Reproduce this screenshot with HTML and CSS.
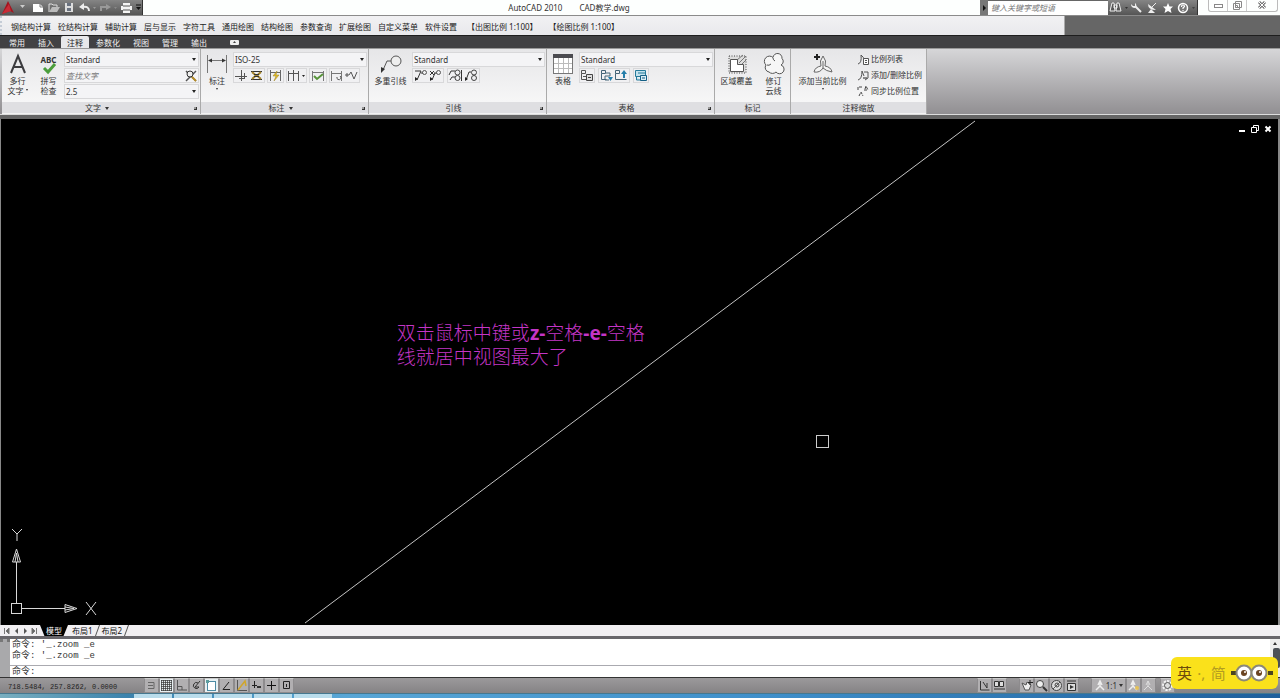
FILE: index.html
```html
<!DOCTYPE html>
<html lang="zh-CN">
<head>
<meta charset="UTF-8">
<meta name="viewport" content="width=device-width, initial-scale=1.0">
<title>AutoCAD 2010 CAD教学.dwg</title>
<link rel="stylesheet" href="styles.css">
</head>
<body>

<header class="titlebar">
    <div class="quick-access">
        <button class="app-button" aria-label="菜单"><svg width="30" height="15" viewBox="0 0 30 15"><path d="M2 14 8 1l6 12-4-2z" fill="#a3151f"/><path d="M2 14 9 4l2 7z" fill="#c92c37"/><path d="M20 5h5l-2.500 3z" fill="#ccc"/></svg></button>
        <button aria-label="新建"><svg width="17" height="15" viewBox="0 0 17 15"><path d="M3 4h7l3 3v5H3z" fill="#fff"/><path d="M10 4v3h3" fill="none" stroke="#777"/></svg></button>
        <button aria-label="打开"><svg width="14" height="15" viewBox="0 0 14 15"><path d="M2 12V4h3l1 1h4v2" fill="none" stroke="#ddd"/><path d="M2 12 5 7h8l-3 5z" fill="#bbb"/></svg></button>
        <button aria-label="保存"><svg width="15" height="15" viewBox="0 0 15 15"><path d="M4 3h8v9H4z" fill="#ddd"/><path d="M6 3h4v3H6zM6 8h4v3H6z" fill="#6a7280"/></svg></button>
        <button aria-label="放弃"><svg width="21" height="15" viewBox="0 0 21 15"><path d="M8 3v7L3 7z" fill="#eee"/><path d="M7 7q6-1 6 4" fill="none" stroke="#eee" stroke-width="2"/><path d="M17 7h3l-1.500 2z" fill="#999"/></svg></button>
        <button aria-label="重做"><svg width="22" height="15" viewBox="0 0 22 15"><path d="M9 4v6l5-3z" fill="#999"/><path d="M9 7H4v4" fill="none" stroke="#999" stroke-width="2"/><path d="M17 7h3l-1.500 2z" fill="#888"/></svg></button>
        <button aria-label="打印"><svg width="23" height="15" viewBox="0 0 23 15"><path d="M4 3h7v3H4zM2 6h11v4H2zM4 9h7v4H4z" fill="#f4f4f4"/><path d="M4 6h7M4 10h7" stroke="#555"/><path d="M17 5h5" stroke="#111"/><path d="M17 7h5l-2.500 3z" fill="#111"/></svg></button>
    </div>
    <h1 class="caption"><span>AutoCAD 2010</span><span>CAD教学.dwg</span></h1>
    <div class="infocenter">
        <button class="expand" aria-label="展开"><svg width="8" height="15" viewBox="0 0 8 15"><path d="M3 5v6l3-3z" fill="#111"/></svg></button>
        <input type="text" placeholder="键入关键字或短语" aria-label="搜索">
        <button aria-label="查找"><svg width="21" height="15" viewBox="0 0 21 15"><path d="M4 3h2l1 8H2zM9 3h2l2 8H8zM6 5h3v3H6z" fill="#555" stroke="#eee"/><path d="M17 7h3l-1.500 2z" fill="#333"/></svg></button>
        <button aria-label="速博应用中心"><svg width="15" height="15" viewBox="0 0 15 15"><path d="m6 6 6 6" stroke="#eee" stroke-width="2"/><path d="M2 4q0 4 4 4 2-1 1-4L6 3v3H4z" fill="#eee"/></svg></button>
        <button aria-label="通讯中心"><svg width="16" height="15" viewBox="0 0 16 15"><path d="M4 4q0 6 8 6zM7 9l-3 4h7z" fill="#eee"/><path d="m8 7 4-4" stroke="#eee"/></svg></button>
        <button aria-label="收藏夹"><svg width="15" height="15" viewBox="0 0 15 15"><path d="m8 3 1.500 3.500H13L10.500 9l1 4L8 11l-3.500 2 1-4L3 6.500h3.500z" fill="#fff"/></svg></button>
        <button aria-label="帮助"><svg width="22" height="15" viewBox="0 0 22 15"><circle cx="8" cy="8" r="4.500" fill="#777" stroke="#fff" stroke-width="1.500"/><path d="M6.500 7q0-2 1.500-2t1.500 1.500L8 8v1M8 10v1" fill="none" stroke="#fff" stroke-width="1.200"/><path d="M17 7h3l-1.500 2z" fill="#444"/></svg></button>
    </div>
    <div class="window-buttons">
        <button aria-label="最小化"><svg width="18" height="11" viewBox="0 0 18 11"><rect x="5.500" y="4.500" width="8" height="3" fill="#fff" stroke="#888"/></svg></button>
        <button aria-label="还原"><svg width="18" height="11" viewBox="0 0 18 11"><path d="M7.500 1.500h6v6h-6zM5.500 3.500h6v6h-6zM7.500 5.500h2v2h-2z" fill="#fff" stroke="#888"/></svg></button>
        <button class="close" aria-label="关闭"><svg width="30" height="11" viewBox="0 0 30 11"><path d="m12 2 6 6m0-6-6 6" stroke="#777" stroke-width="3"/><path d="m12 2 6 6m0-6-6 6" stroke="#fff"/></svg></button>
    </div>
</header>

<div class="menu-row">
    <nav class="menubar">
        <a href="#">钢结构计算</a>
        <a href="#">砼结构计算</a>
        <a href="#">辅助计算</a>
        <a href="#">层与显示</a>
        <a href="#">字符工具</a>
        <a href="#">通用绘图</a>
        <a href="#">结构绘图</a>
        <a href="#">参数查询</a>
        <a href="#">扩展绘图</a>
        <a href="#">自定义菜单</a>
        <a href="#">软件设置</a>
        <a href="#" class="scale">【出图比例 1:100】</a>
        <a href="#" class="scale">【绘图比例 1:100】</a>
    </nav>
</div>

<nav class="ribbon-tabs">
    <button>常用</button>
    <button>插入</button>
    <button class="active">注释</button>
    <button>参数化</button>
    <button>视图</button>
    <button>管理</button>
    <button>输出</button>
    <button class="minimize" aria-label="最小化功能区"><svg width="9" height="6" viewBox="0 0 9 6"><rect width="9" height="5" y="1" rx="1" fill="#eee"/><path d="M3 4h3L4.500 2z" fill="#444"/></svg></button>
</nav>

<main class="ribbon">
    <section class="panel panel-text">
        <div class="panel-body">
            <button class="big narrow">
                <svg width="24" height="24" viewBox="0 0 24 24"><path d="m5 21 7-17 7 17M8 15h9" fill="none" stroke="#3d3d40" stroke-width="2"/></svg>
                <span>多行<br>文字<i class="caret"></i></span>
            </button>
            <button class="big narrow">
                <span class="abc">ABC</span>
                <svg width="24" height="14" viewBox="0 0 24 14"><path d="m7 6 4 4 7-8" fill="none" stroke="#4b9e3c" stroke-width="3"/></svg>
                <span>拼写<br>检查</span>
            </button>
            <div class="stack">
                <div class="combo"><select aria-label="文字样式"><option>Standard</option></select></div>
                <div class="find"><input type="text" placeholder="查找文字" aria-label="查找文字"><button aria-label="查找"><svg width="14" height="14" viewBox="0 0 14 14"><path d="m2 2 10 10M12 2 2 12" stroke="#555" stroke-width="1.500"/><circle cx="6" cy="5" r="3" fill="#eee" stroke="#333"/><path d="m8 8 4 4" stroke="#b58b26" stroke-width="2"/></svg></button></div>
                <div class="combo"><select aria-label="文字高度"><option>2.5</option></select></div>
            </div>
        </div>
        <h2>文字<i class="caret"></i><i class="launcher"></i></h2>
    </section>

    <section class="panel panel-dim">
        <div class="panel-body">
            <button class="big">
                <svg width="24" height="24" viewBox="0 0 24 24"><path d="M2.500 3v18M21.500 3v18M4 8.500h16" stroke="#777"/><path d="m3 8.500 4-2v4zM21 8.500l-4-2v4z" fill="#333"/></svg>
                <span>标注<i class="caret below"></i></span>
            </button>
            <div class="stack">
                <div class="combo"><select aria-label="标注样式"><option>ISO-25</option></select></div>
                <div class="tools">
                    <div class="group">
                        <button aria-label="打断"><svg width="15" height="13" viewBox="0 0 15 13"><path d="M1 7.500h12M7.500 1v11M5 9.500h5M10.500 4v6" stroke="#555"/></svg></button>
                        <button aria-label="调整间距"><svg width="15" height="13" viewBox="0 0 15 13"><path d="M2 2.500h11M2 10.500h11" stroke="#333"/><path d="m3 3 4 3.500L3 10M12 3 8 6.500l4 3.500" fill="none" stroke="#a3832b" stroke-width="2"/><path d="M5 5.500h5M5 7.500h5" stroke="#333"/></svg></button>
                    </div>
                    <div class="group">
                        <button aria-label="快速标注"><svg width="15" height="13" viewBox="0 0 15 13"><path d="M2.500 1v11M12.500 1v11M3 3.500h9" stroke="#666"/><path d="M9 2 5 7h3l-2 5 5-6H8z" fill="#e3bd28" stroke="#9b8123" stroke-width=".5"/></svg></button>
                    </div>
                    <div class="group">
                        <button aria-label="连续"><svg width="19" height="13" viewBox="0 0 19 13"><path d="M1.500 2v10M6.500 1v11M11.500 2v10M2 4.500h10" stroke="#555"/><path d="M15 6h3l-1.500 2z" fill="#222"/></svg></button>
                    </div>
                    <div class="group">
                        <button aria-label="检验"><svg width="16" height="13" viewBox="0 0 16 13"><path d="M2.500 2v10M13.500 2v10M3 3.500h10" stroke="#777"/><path d="m4 7 3 3 6-5" fill="none" stroke="#58943b" stroke-width="2"/></svg></button>
                    </div>
                    <div class="group">
                        <button aria-label="更新"><svg width="14" height="13" viewBox="0 0 14 13"><path d="M1.500 2v10M11.500 2v10M2 4.500h9" stroke="#777"/><path d="M10 7a2 2 0 1 1-3 1" fill="none" stroke="#555"/></svg></button>
                        <button aria-label="折弯标注"><svg width="15" height="13" viewBox="0 0 15 13"><path d="M1 6h4l2-3 3 7 3-7M3 4v4" fill="none" stroke="#555"/></svg></button>
                    </div>
                </div>
            </div>
        </div>
        <h2>标注<i class="caret"></i><i class="launcher"></i></h2>
    </section>

    <section class="panel panel-leader">
        <div class="panel-body">
            <button class="big wide">
                <svg width="24" height="24" viewBox="0 0 24 24"><circle cx="17" cy="9" r="5" fill="#eee" stroke="#555"/><path d="M12 9H8L4 18" fill="none" stroke="#555"/><path d="m2 21 0-6 4 2z" fill="#333"/></svg>
                <span>多重引线</span>
            </button>
            <div class="stack">
                <div class="combo"><select aria-label="引线样式"><option>Standard</option></select></div>
                <div class="tools">
                    <div class="group">
                        <button aria-label="添加引线"><svg width="15" height="13" viewBox="0 0 15 13"><path d="M2 2h6L4 11M8 4h2" fill="none" stroke="#333"/><path d="m2 8 0 4 3-2z" fill="#222"/><circle cx="11.500" cy="3.500" r="2" fill="none" stroke="#555"/></svg></button>
                        <button aria-label="删除引线"><svg width="15" height="13" viewBox="0 0 15 13"><path d="m2 2 4 4m0-4L2 6M6 4h3M7 4l-3 7" fill="none" stroke="#333"/><path d="m2 8 0 4 3-2z" fill="#222"/><circle cx="10.500" cy="3.500" r="2" fill="none" stroke="#555"/></svg></button>
                    </div>
                    <div class="group">
                        <button aria-label="对齐"><svg width="16" height="13" viewBox="0 0 16 13"><path d="M7 2H3L1 6M7 8H4l-2 3M13.500 1v11" fill="none" stroke="#333"/><circle cx="9.500" cy="3.500" r="2.500" fill="none" stroke="#444"/><circle cx="9.500" cy="9" r="2.500" fill="none" stroke="#444"/></svg></button>
                        <button aria-label="合并"><svg width="15" height="13" viewBox="0 0 15 13"><path d="M7 3H5l-3 8" fill="none" stroke="#333"/><path d="m1 8 0 4 3-2z" fill="#222"/><circle cx="10" cy="3.500" r="2.500" fill="none" stroke="#444"/><circle cx="10" cy="9" r="2.500" fill="none" stroke="#444"/></svg></button>
                    </div>
                </div>
            </div>
        </div>
        <h2>引线<i class="launcher"></i></h2>
    </section>

    <section class="panel panel-table">
        <div class="panel-body">
            <button class="big">
                <svg width="24" height="24" viewBox="0 0 24 24"><rect x="2.500" y="2.500" width="19" height="19" fill="#fff" stroke="#777"/><path d="M2 2h20v4H2z" fill="#4b4b50"/><path d="M7.500 6v15M12.500 6v15M17.500 6v15M3 11.500h18M3 16.500h18" stroke="#bbb"/></svg>
                <span>表格</span>
            </button>
            <div class="stack">
                <div class="combo"><select aria-label="表格样式"><option>Standard</option></select></div>
                <div class="tools">
                    <div class="group">
                        <button aria-label="提取数据"><svg width="14" height="13" viewBox="0 0 14 13"><path d="M1.500 1.500h4v3h-4zM1.500 4.500v6h5M3 7.500h3" fill="none" stroke="#555"/><path d="M6.500 5.500h6v6h-6zM8 8.500h3" fill="#ddd" stroke="#444"/></svg></button>
                    </div>
                    <div class="group">
                        <button aria-label="从源下载"><svg width="15" height="13" viewBox="0 0 15 13"><path d="M2.500 1.500h4v3h-4zM2.500 4.500v6h5M7 4h4v3H6v4h4" fill="none" stroke="#456477"/><path d="M9 8h5l-2.500 4z" fill="#257eaa"/></svg></button>
                        <button aria-label="上载到源"><svg width="15" height="13" viewBox="0 0 15 13"><path d="M1.500 1.500h4v3h-4zM1.500 4.500v6h11" fill="none" stroke="#456477"/><path d="M7 5h6l-3-4zM9 5h2v4H9z" fill="#257eaa"/></svg></button>
                    </div>
                    <div class="group">
                        <button aria-label="数据链接"><svg width="14" height="13" viewBox="0 0 14 13"><path d="M1.500 1.500h10v6h-10zM4 4h7M2.500 8v3h5" fill="#c4e2ed" stroke="#257b9a"/><path d="M6.500 6.500h6v5h-6zM8 9h3" fill="#d9edf4" stroke="#145f85"/></svg></button>
                    </div>
                </div>
            </div>
        </div>
        <h2>表格<i class="launcher"></i></h2>
    </section>

    <section class="panel panel-markup">
        <div class="panel-body">
            <button class="big wide">
                <svg width="24" height="24" viewBox="0 0 24 24"><path d="M4 4h17v17H4z" fill="#ddd" stroke="#444" stroke-dasharray="1 1.500"/><path d="m12 8 6-5m-4 8 7-7m-5 9 5-5" stroke="#777"/><path d="M5.500 7.500h7v5h6v7h-13z" fill="#fff" stroke="#555"/></svg>
                <span>区域覆盖</span>
            </button>
            <button class="big narrow">
                <svg width="24" height="24" viewBox="0 0 24 24"><path d="M11 5.500a4.500 4.500 0 0 1 9 1 4 4 0 0 1-1 6.500 4.500 4.500 0 1 1-5 7 5 5 0 0 1-7 0 4.500 4.500 0 0 1-3-7 4.500 4.500 0 1 1 7-7.500zM5 13q2 1 4-1M11 6q0 2 2 3" fill="#f6f6f6" stroke="#555"/></svg>
                <span>修订<br>云线</span>
            </button>
        </div>
        <h2>标记</h2>
    </section>

    <section class="panel panel-scale">
        <div class="panel-body">
            <button class="big xwide">
                <svg width="24" height="24" viewBox="0 0 24 24"><path d="M12 4q4 5 2 10 6 1 7 6-6-1-9-4-3 5-9 4 1-5 7-6-2-5 2-10zM12 16V9" fill="#f4f4f4" stroke="#666"/><path d="M6 2v6M3 5h6" stroke="#222" stroke-width="2"/></svg>
                <span>添加当前比例<i class="caret below"></i></span>
            </button>
            <div class="list">
                <button><svg width="12" height="12" viewBox="0 0 12 12"><path d="M1 11q4-1 3-9 3 2 3 5" fill="none" stroke="#555"/><path d="M6.500 5.500h5v6h-5zM8 7.500h2M8 9.500h2" fill="#fff" stroke="#555"/></svg>比例列表</button>
                <button><svg width="12" height="12" viewBox="0 0 12 12"><path d="M1 11q4-1 4-9l2 5M7 3h4v6l-3 2" fill="none" stroke="#555"/><path d="M6 9h4" stroke="#222"/></svg>添加/删除比例</button>
                <button><svg width="12" height="12" viewBox="0 0 12 12"><path d="M1 5V2h4M2 11l2-4 2 4M8 4l1-3 2 4M7 5h4" fill="none" stroke="#444" stroke-dasharray="3 1"/></svg>同步比例位置</button>
            </div>
        </div>
        <h2>注释缩放</h2>
    </section>
</main>

<section class="drawing">
    <svg class="model" viewBox="0 0 1277 506" preserveAspectRatio="none">
        <path d="M974 2 304 504" stroke="#c4c4c4" fill="none"/>
        <rect x="815.500" y="316.500" width="12" height="12" fill="none" stroke="#ccc"/>
    </svg>
    <p class="note">双击鼠标中键或<b>z-</b>空格<b>-e-</b>空格<br>线就居中视图最大了</p>
    <svg class="ucs" width="90" height="90" viewBox="0 0 90 90" fill="none" stroke="#d8d8d8">
        <path d="m5 0 5 5 5-5M10 5v7M9.500 74V33M5.500 33l4-13 4 13zM8 33l1.500-9 1.500 9M15 79.500h43M58 75.500l12 4-12 4zM58 78l9 1.500-9 1.500M79 73l10 13M89 73 79 86"/>
        <rect x="4.500" y="74.500" width="10" height="10"/>
    </svg>
    <div class="doc-buttons">
        <button aria-label="最小化"><svg width="8" height="8" viewBox="0 0 8 8"><path d="M1 6h6" stroke="#fff" stroke-width="2"/></svg></button>
        <button aria-label="还原"><svg width="8" height="8" viewBox="0 0 8 8"><path d="M2.500 2V.5h5v5H6M.5 2.500h5v5h-5z" fill="none" stroke="#fff"/></svg></button>
        <button aria-label="关闭"><svg width="8" height="8" viewBox="0 0 8 8"><path d="m1.500 1.500 5 5m0-5-5 5" stroke="#fff" stroke-width="2"/></svg></button>
    </div>
</section>

<nav class="layout-tabs">
    <button aria-label="第一个"><svg width="10" height="10" viewBox="0 0 10 10"><path d="M2.500 2v6M7 2 4 5l3 3z" fill="#666" stroke="#777"/></svg></button>
    <button aria-label="上一个"><svg width="9" height="10" viewBox="0 0 9 10"><path d="M6 2v6L3 5z" fill="#555"/></svg></button>
    <button aria-label="下一个"><svg width="9" height="10" viewBox="0 0 9 10"><path d="M3 2v6l3-3z" fill="#555"/></svg></button>
    <button aria-label="最后一个"><svg width="10" height="10" viewBox="0 0 10 10"><path d="M6.500 2v6M2 2l3 3-3 3z" fill="#666" stroke="#777"/></svg></button>
    <button class="sheet active">模型</button>
    <button class="sheet">布局1</button><span class="slash"></span>
    <button class="sheet">布局2</button><span class="slash"></span>
</nav>

<section class="command">
    <div class="grip"></div>
    <div class="console">
        <div class="history">命令: '_.zoom _e<br>命令: '_.zoom _e</div>
        <label class="prompt">命令: <input type="text"></label>
    </div>
    <div class="scrollbar"><svg width="9" height="9" viewBox="0 0 9 9"><path d="M3 6h4L5 3z" fill="#333"/></svg><div class="thumb"></div></div>
</section>

<footer class="statusbar">
    <span class="coords">718.5484, 257.8262, 0.0000</span>
    <div class="toggles">
        <button aria-label="捕捉"><svg width="13" height="13" viewBox="0 0 13 13"><path d="M3 3.500h6v6H3M3 6.500h5" fill="none" stroke="#666"/></svg></button>
        <button class="on" aria-label="栅格"><svg width="13" height="13" viewBox="0 0 13 13"><path d="M1 1.500h11M1 3.500h11M1 5.500h11M1 7.500h11M1 9.500h11M1 11.500h11M1.500 1v11M3.500 1v11M5.500 1v11M7.500 1v11M9.500 1v11M11.500 1v11" stroke="#333" stroke-width=".700"/></svg></button>
        <button aria-label="正交"><svg width="13" height="13" viewBox="0 0 13 13"><path d="M2.500 1v10H12M3 7.500h4V11" fill="none" stroke="#555"/></svg></button>
        <button aria-label="极轴"><svg width="13" height="13" viewBox="0 0 13 13"><path d="M8 4a3 3 0 1 0 1 4H5l5-6" fill="none" stroke="#333"/></svg></button>
        <button class="on" aria-label="对象捕捉"><svg width="13" height="13" viewBox="0 0 13 13"><rect x="2.500" y="2.500" width="8" height="9" fill="#fff" stroke="#4d8ba4"/><path d="M1 1h3v3H1z" fill="#5d9d9d"/></svg></button>
        <button aria-label="对象追踪"><svg width="13" height="13" viewBox="0 0 13 13"><path d="M9 3 3 10.500h7" fill="none" stroke="#222"/></svg></button>
        <button aria-label="动态UCS"><svg width="13" height="13" viewBox="0 0 13 13"><path d="M2.500 1v10.500H12" fill="none" stroke="#555"/><path d="m3 11 7-9 1 5" fill="none" stroke="#d0a62b" stroke-width="1.500"/></svg></button>
        <button aria-label="动态输入"><svg width="13" height="13" viewBox="0 0 13 13"><path d="M4.500 2v7M2 6.500h5" stroke="#222"/><path d="M7 7h4v2H7z" fill="#333"/></svg></button>
        <button aria-label="线宽"><svg width="13" height="13" viewBox="0 0 13 13"><path d="M6.500 2v9M2 6.500h9" stroke="#111"/></svg></button>
        <button aria-label="快捷特性"><svg width="13" height="13" viewBox="0 0 13 13"><path d="M3.500 2.500h6v7h-6zM6.500 5v3" fill="none" stroke="#222"/></svg></button>
    </div>
    <div class="view-tools">
        <div class="toggles">
            <button aria-label="快速查看布局"><svg width="13" height="13" viewBox="0 0 13 13"><path d="M2.500 2v9h9M5 3l4 6V4" fill="none" stroke="#333"/></svg></button>
            <button aria-label="快速查看图形"><svg width="13" height="13" viewBox="0 0 13 13"><path d="M1.500 2.500h4v5h-4zM6.500 2.500h4v5h-4zM1 10h11" fill="#ddd" stroke="#333"/></svg></button>
        </div>
        <div class="toggles">
            <button aria-label="平移"><svg width="13" height="13" viewBox="0 0 13 13"><path d="M2 4 5 11h4l2-5-4-3-1 3z" fill="#eee" stroke="#555"/><path d="M10 1v5M8 3.500h5" stroke="#222"/></svg></button>
            <button aria-label="缩放"><svg width="13" height="13" viewBox="0 0 13 13"><circle cx="5" cy="5" r="3.500" fill="#eee" stroke="#444"/><path d="m8 8 4 4" stroke="#333" stroke-width="2"/></svg></button>
            <button aria-label="控制盘"><svg width="13" height="13" viewBox="0 0 13 13"><circle cx="6.500" cy="6.500" r="5" fill="#ddd" stroke="#444"/><circle cx="7" cy="6" r="2" fill="none" stroke="#444"/><path d="m3 10 7-7" stroke="#555"/></svg></button>
            <button aria-label="ShowMotion"><svg width="13" height="13" viewBox="0 0 13 13"><path d="M2.500 4.500h8v7h-8zM2 2h9" fill="#ddd" stroke="#333"/><path d="m5 6 4 2-4 2z" fill="#333"/></svg></button>
        </div>
        <div class="toggles">
            <button class="anno"><svg width="12" height="13" viewBox="0 0 12 13"><path d="M6 2v5l-4 4M6 7l4 4M4 6l2-4 2 4" fill="none" stroke="#eee" stroke-width="1.500"/></svg>1:1<i class="caret"></i></button>
            <button aria-label="注释可见性"><svg width="13" height="13" viewBox="0 0 13 13"><path d="M6 2v5l-4 4M6 7l4 4M4 6l2-4 2 4" fill="none" stroke="#eee" stroke-width="1.500"/><circle cx="10" cy="9" r="2" fill="#e5c257"/></svg></button>
            <button aria-label="自动缩放"><svg width="13" height="13" viewBox="0 0 13 13"><path d="M6 2v5l-4 4M6 7l4 4M4 6l2-4 2 4" fill="none" stroke="#ddd"/></svg></button>
        </div>
        <div class="toggles workspace">
            <button aria-label="工作空间"><svg width="13" height="13" viewBox="0 0 13 13"><circle cx="6.500" cy="6.500" r="4" fill="none" stroke="#f4f4f4" stroke-width="3" stroke-dasharray="2 1"/><circle cx="6.500" cy="6.500" r="3" fill="#ddd" stroke="#555"/></svg></button>
        </div>
    </div>
</footer>

<div class="taskbar"><span></span><span></span><span></span><span></span><span></span></div>

<aside class="ime">
    <span>英</span>
    <span class="dim">·,</span>
    <span class="dim">简</span>
    <svg width="42" height="20" viewBox="0 0 42 20"><path d="M0 8h5v4H0zM37 8h5v4h-5z" fill="#4c4420"/><circle cx="13" cy="10" r="7.500" fill="#fff" stroke="#8b8878" stroke-width="2"/><circle cx="28" cy="10" r="7.500" fill="#fff" stroke="#8b8878" stroke-width="2"/><circle cx="13" cy="10" r="3" fill="#6b4422"/><circle cx="28" cy="10" r="3" fill="#6b4422"/><circle cx="14" cy="9" r="1" fill="#fff"/><circle cx="29" cy="9" r="1" fill="#fff"/></svg>
</aside>

</body>
</html>
```
FILE: styles.css
```css
* {
    box-sizing: border-box;
}
body {
    margin: 0;
    height: 100vh;
    display: flex;
    flex-direction: column;
    overflow: hidden;
    background: #666;
    color: #333;
    font: 8px/12px "Noto Sans", "Noto Sans CJK SC", sans-serif;
}
button, input, select {
    font: inherit;
    color: inherit;
    margin: 0;
    padding: 0;
    border: 0;
    border-radius: 0;
    background: none;
}
button {
    white-space: nowrap;
}
svg {
    display: block;
    flex: none;
}
h1, h2, p {
    margin: 0;
    font-size: 8px;
    font-weight: normal;
}
a {
    color: inherit;
    text-decoration: none;
}

/* title bar */
.titlebar {
    display: flex;
    flex: none;
    height: 16px;
    background: #fdfffe;
    border-bottom: 1px solid #8b8b8b;
}
.quick-access, .infocenter {
    display: flex;
    background: linear-gradient(#858585, #555);
    border-right: 1px solid #333;
}
.caption {
    flex: 1;
    display: flex;
    justify-content: center;
    gap: 17px;
    padding-left: 15px;
    line-height: 15px;
}
.infocenter {
    width: 218px;
    margin-right: 10px;
}
.infocenter input {
    flex: 1;
    min-width: 0;
    padding-left: 3px;
    background: #fff;
    border-top: 1px solid #666;
    font-style: italic;
}
.expand {
    background: #777;
}
input::placeholder {
    color: #777;
    opacity: 1;
}
.window-buttons {
    display: flex;
    height: 12px;
    margin-right: 2px;
    border: 1px solid #bbb;
    border-top: 0;
    border-radius: 0 0 3px 3px;
}
.window-buttons button + button {
    border-left: 1px solid #ccc;
}

/* menu */
.menu-row {
    flex: none;
    height: 20px;
    background: #666;
    border-bottom: 1px solid #1e1e1e;
}
.menubar {
    display: flex;
    gap: 7px;
    width: 83.2%;
    height: 19px;
    padding-left: 9px;
    background: linear-gradient(#f1f1f3, #e9e9ec);
    border-left: 2px dotted #c5ccd6;
    border-right: 1px solid #aaa;
    line-height: 21px;
    white-space: nowrap;
    color: #222;
}
.menubar .scale {
    margin-left: 3px;
}
.menubar .scale + .scale {
    margin-left: 4px;
}

/* ribbon */
.ribbon-tabs {
    display: flex;
    flex: none;
    gap: 1px;
    height: 12px;
    padding-left: 3px;
    background: #414143;
    color: #f2f2f2;
}
.ribbon-tabs button {
    padding: 0 6px;
    line-height: 13px;
}
.ribbon-tabs .active {
    background: #e8e8ea;
    color: #222;
    border-radius: 2px 2px 0 0;
}
.ribbon-tabs .minimize {
    margin-left: 10px;
}
.ribbon {
    display: flex;
    flex: none;
    height: 67px;
    padding-left: 2px;
    background: linear-gradient(#d6d6d8, #918f92);
    border-top: 1px solid #999;
    border-bottom: 1px solid #ddd;
}
.panel {
    display: flex;
    flex-direction: column;
    border-right: 1px solid #aaa;
    background: linear-gradient(#e6e6e8, #fafafa);
}
.panel-text {
    width: 199px;
}
.panel-dim, .panel-table {
    width: 168px;
}
.panel-leader {
    width: 178px;
}
.panel-markup {
    width: 76px;
}
.panel-scale {
    width: 136px;
}
.panel-body {
    display: flex;
    flex: 1;
    padding-top: 3px;
}
.panel h2 {
    position: relative;
    height: 12px;
    padding-right: 8px;
    background: #dfdfe2;
    border-bottom: 1px solid #f3f3f3;
    text-align: center;
    line-height: 11px;
}
.panel-markup h2, .panel-scale h2 {
    padding-right: 0;
}
.big {
    display: flex;
    flex-direction: column;
    align-items: center;
    width: 32px;
    line-height: 10px;
}
.big.narrow {
    width: 31px;
}
.big.wide {
    width: 43px;
}
.big.xwide {
    width: 63px;
}
.abc {
    height: 10px;
    font-weight: bold;
    line-height: 15px;
}
.caret {
    display: inline-block;
    margin-left: 4px;
    border: 2px solid transparent;
    border-top: 3px solid #333;
    border-bottom: 0;
    vertical-align: 1px;
}
.big .caret {
    margin-left: 2px;
    border-width: 2px 1px 0;
    vertical-align: 3px;
}
.caret.below, .big .caret.below {
    display: block;
    width: 2px;
    margin: 2px auto 0;
}
.launcher {
    position: absolute;
    right: 3px;
    bottom: 3px;
    width: 3px;
    height: 3px;
    border-right: 1px solid #333;
    border-bottom: 1px solid #333;
    background: #999;
}
.stack {
    display: flex;
    flex: 1;
    flex-direction: column;
    gap: 1px;
}
.combo, .find {
    position: relative;
    display: flex;
    height: 15px;
    margin-right: 1px;
    background: #f4f4f6;
    border: 1px solid #d8d8da;
}
.combo select {
    width: 100%;
    padding-left: 1px;
    appearance: none;
}
.combo::after {
    content: "";
    position: absolute;
    right: 2px;
    top: 5px;
    border: 2px solid transparent;
    border-top: 3px solid #222;
    border-bottom: 0;
    pointer-events: none;
}
.find input {
    flex: 1;
    min-width: 0;
    padding-left: 1px;
    font-style: italic;
}
.tools {
    display: flex;
    gap: 2px;
}
.panel-leader .tools, .panel-table .tools {
    gap: 3px;
}
.group {
    display: flex;
    background: #f0f0f2;
    border: 1px solid #d8d8da;
}
.panel-scale .list {
    display: flex;
    flex-direction: column;
    gap: 4px;
    padding-left: 3px;
    padding-top: 1px;
}
.list button {
    display: flex;
    gap: 2px;
    line-height: 12px;
}

/* drawing area */
.drawing {
    position: relative;
    flex: 1;
    min-height: 0;
    margin-top: 4px;
    background: #000;
    border-left: 1px solid #888;
    border-right: 2px solid #888;
}
.model {
    width: 100%;
    height: 100%;
}
.note {
    position: absolute;
    left: 31%;
    top: 40%;
    color: #c435c6;
    font-size: 19px;
    font-weight: 300;
    line-height: 24px;
    white-space: nowrap;
}
.note b {
    font-weight: 700;
}
.ucs {
    position: absolute;
    left: 6px;
    bottom: 6px;
    overflow: visible;
}
.doc-buttons {
    position: absolute;
    top: 6px;
    right: 6px;
    display: flex;
    gap: 5px;
}

/* layout tabs */
.layout-tabs {
    display: flex;
    flex: none;
    height: 11px;
    padding-left: 2px;
    background: #f1eff2;
    line-height: 11px;
    color: #111;
}
.sheet {
    padding: 0 4px;
}
.sheet.active {
    padding: 0 6px;
    background: #000;
    color: #fff;
    clip-path: polygon(0 0, 100% 0, 84% 100%, 16% 100%);
}
.slash {
    width: 1px;
    height: 11px;
    background: #555;
    transform: skewX(-20deg);
}

/* command window */
.command {
    display: flex;
    flex: none;
    height: 42px;
    border-top: 3px solid #68666b;
    border-bottom: 1px solid #333;
    background: #fff;
    font: 9px/11px "Liberation Mono", "Noto Sans CJK SC", monospace;
}
.grip {
    width: 10px;
    background: #a9a9ab;
    border-top: 3px dotted #777;
}
.console {
    flex: 1;
}
.history {
    height: 27px;
    padding: 1px 0 0 2px;
    border-bottom: 1px solid #aaaab0;
}
.prompt {
    display: flex;
    padding: 1px 0 0 2px;
}
.prompt input {
    flex: 1;
    height: 11px;
    outline: 0;
}
.scrollbar {
    width: 10px;
    background: #eee;
}
.thumb {
    height: 20px;
    margin-left: 3px;
    background: #4b5056;
    border-radius: 2px;
}

/* status bar */
.statusbar {
    display: flex;
    flex: none;
    height: 15px;
    background: linear-gradient(#9b999b, #858385);
}
.coords {
    width: 144px;
    padding-left: 8px;
    font: 7px/18px "Liberation Mono", monospace;
    color: #222;
}
.toggles {
    display: flex;
}
.toggles button {
    display: flex;
    align-items: center;
    justify-content: center;
    min-width: 15px;
    background: #b1afb1;
    border: 1px solid #8d8b8d;
    border-top-color: #ccc;
}
.toggles .on {
    background: #e8f0f2;
}
.toggles .anno {
    padding: 0 2px;
}
.anno .caret {
    margin-left: 2px;
}
.view-tools {
    display: flex;
    gap: 12px;
    margin-left: auto;
    padding-right: 105px;
}
.view-tools .workspace {
    width: 15px;
    margin-left: -8px;
}

/* windows taskbar */
.taskbar {
    display: flex;
    flex: none;
    gap: 2px;
    height: 5px;
    padding-left: 134px;
    background: linear-gradient(90deg, #78aebf, #3c83ad 10%, #58a6d6 27%, #3f8fca 60%, #1e5f9c);
    border-top: 1px solid #45788f;
}
.taskbar span {
    width: 38px;
    background: #b9dceb;
}

/* input method bar */
.ime {
    position: fixed;
    right: 2px;
    bottom: 9px;
    display: flex;
    align-items: center;
    justify-content: space-between;
    width: 107px;
    height: 32px;
    padding: 0 5px 0 6px;
    border-radius: 6px;
    background: #fae11b;
    color: #6b4a0c;
    font-size: 15px;
    line-height: 28px;
}
.ime .dim {
    color: #b29c20;
}
```
